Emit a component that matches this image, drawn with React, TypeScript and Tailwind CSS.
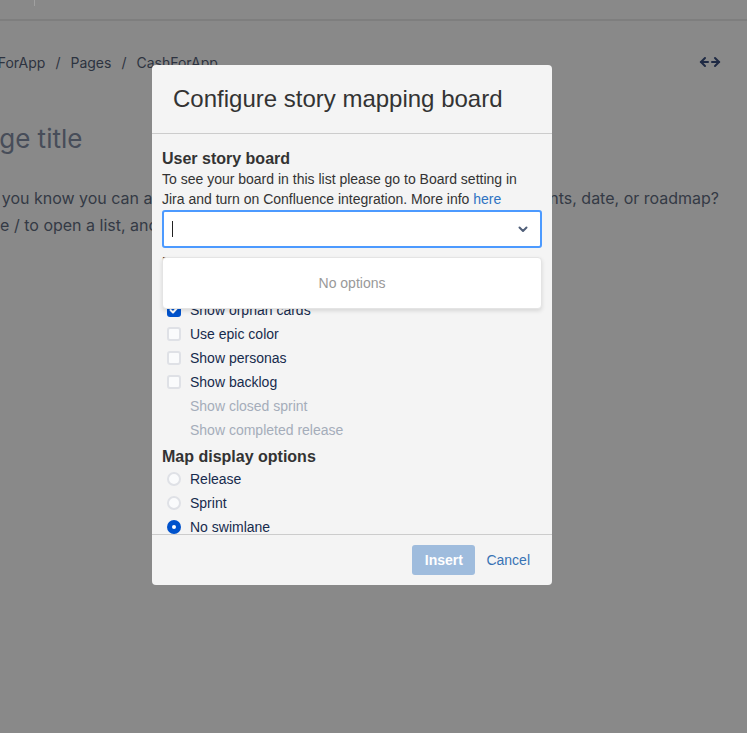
import { useState } from "react";

export default function App() {
  const [options, setOptions] = useState({
    unassigned: false,
    orphan: true,
    epicColor: false,
    personas: false,
    backlog: false,
  });
  const [swimlane, setSwimlane] = useState("none");

  const toggle = (key: keyof typeof options) =>
    setOptions((o) => ({ ...o, [key]: !o[key] }));

  return (
    <div className="relative w-[747px] h-[733px] overflow-hidden bg-[#898989] font-['Liberation_Sans',Arial,sans-serif]">
      {/* BACKGROUND PAGE (dimmed) */}

      <div className="h-[21px] border-b-2 border-[#7e7e7e] relative">
        <div className="absolute left-[34px] top-0 w-px h-[6px] bg-[#a0a0a0]" />
      </div>

      <div className="font-['Inter',sans-serif] ml-[-36px] pr-[20px]">
        <div className="flex items-center justify-between mt-[31px] h-[20px] text-[14px] text-[#2d3340]">
          <div className="flex gap-[10px]">
            <span>CashForApp</span>
            <span>/</span>
            <span>Pages</span>
            <span>/</span>
            <span>CashForApp</span>
          </div>
          <svg width="22" height="12" viewBox="0 0 22 12" className="mr-[6px]">
            <path d="M6 2 L2 6 L6 10" fill="none" stroke="#1f2a44" strokeWidth="2" strokeLinecap="round" />
            <path d="M2 6 H9" stroke="#1f2a44" strokeWidth="2" strokeLinecap="round" />
            <path d="M16 2 L20 6 L16 10" fill="none" stroke="#1f2a44" strokeWidth="2" strokeLinecap="round" />
            <path d="M13 6 H20" stroke="#1f2a44" strokeWidth="2" strokeLinecap="round" />
          </svg>
        </div>

        <h1 className="mt-[49px] text-[26px] leading-[36px] text-[#474d59] pl-[4px]">Page title</h1>

        <div className="mt-[28px] text-[16px] leading-[27px] text-[#343a45] pl-[8px] whitespace-nowrap">
          <p>Did you know you can add tables, images, code blocks, mentions,{"\u00a0"} attachments, date, or roadmap?</p>
          <p>Type / to open a list, and @ to mention a teammate.</p>
        </div>
      </div>

      {/* MODAL */}

      <div className="absolute left-[152px] top-[65px] w-[400px] h-[520px] bg-[#f4f4f4] rounded-[4px] flex flex-col">
        <div className="h-[69px] border-b border-[#cccccc] px-[21px] flex items-center">
          <h2 className="text-[24px] text-[#333333]">Configure story mapping board</h2>
        </div>

        <div className="relative h-[400px] overflow-hidden px-[10px] pt-[15px]">
          <p className="text-[16px] leading-[20px] font-bold text-[#333333]">User story board</p>
          <p className="text-[14px] leading-[20px] text-[#333333]">
            To see your board in this list please go to Board setting in Jira and turn on Confluence integration. More info{" "}
            <a className="text-[#2f73c2]">here</a>
          </p>

          <div className="mt-px h-[38px] w-[380px] bg-white border-2 border-[#4c9aff] rounded-[3px] flex items-center justify-between pl-[8px] pr-[12px]">
            <div className="w-px h-[16px] bg-[#222]" />
            <svg width="10" height="7" viewBox="0 0 10 7">
              <path d="M1.5 1.5 L5 5 L8.5 1.5" fill="none" stroke="#505f79" strokeWidth="2" strokeLinecap="round" strokeLinejoin="round" />
            </svg>
          </div>

          <p className="mt-[6px] text-[16px] leading-[20px] font-bold text-[#333333]">Display options</p>
          <Check label="Show unassigned" checked={options.unassigned} onChange={() => toggle("unassigned")} />
          <Check label="Show orphan cards" checked={options.orphan} onChange={() => toggle("orphan")} />
          <Check label="Use epic color" checked={options.epicColor} onChange={() => toggle("epicColor")} />
          <Check label="Show personas" checked={options.personas} onChange={() => toggle("personas")} />
          <Check label="Show backlog" checked={options.backlog} onChange={() => toggle("backlog")} />
          <Check label="Show closed sprint" disabled />
          <Check label="Show completed release" disabled />

          <p className="mt-[5px] text-[16px] leading-[20px] font-bold text-[#333333]">Map display options</p>
          <Radio label="Release" checked={swimlane === "release"} onChange={() => setSwimlane("release")} />
          <Radio label="Sprint" checked={swimlane === "sprint"} onChange={() => setSwimlane("sprint")} />
          <Radio label="No swimlane" checked={swimlane === "none"} onChange={() => setSwimlane("none")} />

          {/* DROPDOWN MENU */}

          <div className="absolute left-[10px] top-[123px] w-[380px] h-[52px] bg-white rounded-[4px] border border-[#e4e4e4] shadow-[0_2px_4px_rgba(0,0,0,0.12)] flex items-center justify-center">
            <span className="text-[14px] text-[#999999]">No options</span>
          </div>
        </div>

        <div className="flex-1 border-t border-[#cccccc] flex items-center justify-end gap-[3px] pr-[14px]">
          <button className="h-[30px] w-[63px] rounded-[3px] bg-[#9fbcdd] text-white font-bold text-[14px]">Insert</button>
          <button className="h-[30px] px-[8px] text-[14px] text-[#3873b4]">Cancel</button>
        </div>
      </div>
    </div>
  );
}

function Check({
  label,
  checked = false,
  disabled = false,
  onChange,
}: {
  label: string;
  checked?: boolean;
  disabled?: boolean;
  onChange?: () => void;
}) {
  return (
    <div className="h-[24px] flex items-center pl-[5px] gap-[9px] cursor-pointer" onClick={disabled ? undefined : onChange}>
      {disabled ? (
        <div className="w-[14px] h-[14px]" />
      ) : checked ? (
        <div className="w-[14px] h-[14px] rounded-[3px] bg-[#0052cc] flex items-center justify-center">
          <svg width="10" height="8" viewBox="0 0 10 8">
            <path d="M1.5 4 L4 6.5 L8.5 1.5" fill="none" stroke="white" strokeWidth="2" strokeLinecap="round" strokeLinejoin="round" />
          </svg>
        </div>
      ) : (
        <div className="w-[14px] h-[14px] rounded-[3px] bg-[#fafbfc] border-2 border-[#dfe1e6]" />
      )}
      <span className={`text-[14px] ${disabled ? "text-[#a5adba]" : "text-[#172b4d]"}`}>{label}</span>
    </div>
  );
}

function Radio({ label, checked, onChange }: { label: string; checked: boolean; onChange: () => void }) {
  return (
    <div className="h-[24px] flex items-center pl-[5px] gap-[9px] cursor-pointer" onClick={onChange}>
      {checked ? (
        <div className="w-[14px] h-[14px] rounded-full bg-[#0052cc] flex items-center justify-center">
          <div className="w-[4px] h-[4px] rounded-full bg-white" />
        </div>
      ) : (
        <div className="w-[14px] h-[14px] rounded-full bg-[#fafbfc] border-2 border-[#dfe1e6]" />
      )}
      <span className="text-[14px] text-[#172b4d]">{label}</span>
    </div>
  );
}
